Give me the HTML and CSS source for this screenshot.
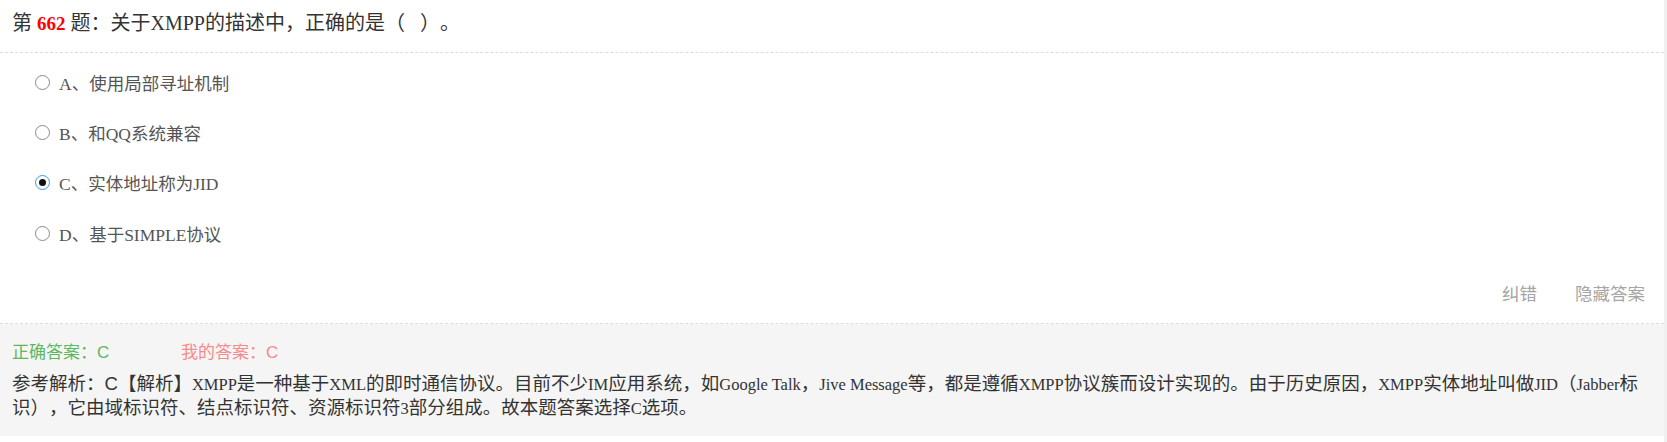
FILE: index.html
```html
<!DOCTYPE html>
<html lang="zh-CN">
<head>
<meta charset="utf-8">
<title>第662题</title>
<link rel="stylesheet" href="styles.css">
</head>
<body>
<div class="page">
  <div class="question">
    <div class="q-title">第 <span class="q-num">662</span> 题：关于XMPP的描述中，正确的是（&nbsp; &nbsp;）。</div>
    <ul class="options">
      <li class="option"><span class="radio"></span><span class="opt-text">A、使用局部寻址机制</span></li>
      <li class="option"><span class="radio"></span><span class="opt-text">B、和QQ系统兼容</span></li>
      <li class="option"><span class="radio checked"></span><span class="opt-text">C、实体地址称为JID</span></li>
      <li class="option"><span class="radio"></span><span class="opt-text">D、基于SIMPLE协议</span></li>
    </ul>
    <div class="actions">
      <span class="action">纠错</span>
      <span class="action">隐藏答案</span>
    </div>
    <div class="answer">
      <div class="answer-row">
        <span class="right-ans">正确答案：C</span>
        <span class="my-ans">我的答案：C</span>
      </div>
      <p class="analysis"><span class="label">参考解析：C</span>【解析】<span class="en">XMPP</span>是一种基于<span class="en">XML</span>的即时通信协议。目前不少<span class="en">IM</span>应用系统，如<span class="en">Google Talk</span>，<span class="en">Jive Message</span>等，都是遵循<span class="en">XMPP</span>协议簇而设计实现的。由于历史原因，<span class="en">XMPP</span>实体地址叫做<span class="en">JID</span>（<span class="en">Jabber</span>标识），它由域标识符、结点标识符、资源标识符<span class="en">3</span>部分组成。故本题答案选择<span class="en">C</span>选项。</p>
    </div>
  </div>
</div>
</body>
</html>
```
FILE: styles.css
```css
html, body {
  margin: 0;
  padding: 0;
}
body {
  background: #f0f0f0;
  font-family: "Liberation Serif", "Noto Sans CJK SC", serif;
  color: #333;
  text-spacing-trim: space-all;
}
.page {
  width: 1664px;
  background: #fff;
  padding-bottom: 20px;
}
.q-title {
  font-size: 20px;
  line-height: 30px;
  padding: 8px 12px 13px;
  border-bottom: 1px dashed #dcdcdc;
  color: #333;
}
.q-num {
  color: #ff0000;
  font-weight: bold;
  font-size: 19px;
}
.options {
  list-style: none;
  margin: 0;
  padding: 4px 0 0 35px;
}
.option {
  display: flex;
  align-items: center;
  height: 50.3px;
  font-size: 17.5px;
  color: #555;
}
.radio {
  box-sizing: border-box;
  width: 15px;
  height: 15px;
  border: 1px solid #8a8a8a;
  border-radius: 50%;
  background: #fff;
  margin-right: 9px;
  display: flex;
  align-items: center;
  justify-content: center;
}
.radio.checked {
  border: 1.5px solid #3b9ae6;
}
.radio.checked::after {
  content: "";
  width: 7px;
  height: 7px;
  border-radius: 50%;
  background: #111;
}
.actions {
  display: flex;
  justify-content: flex-end;
  gap: 38px;
  padding: 19px 19px 14px;
  line-height: 32px;
  font-size: 17.5px;
  color: #a5a5a5;
  font-family: "Noto Sans CJK SC", sans-serif;
  border-bottom: 1px dashed #dcdcdc;
}
.answer {
  background: #f5f5f5;
  padding: 17px 12px 16px;
}
.answer-row {
  display: flex;
  font-family: "Liberation Sans", "Noto Sans CJK SC", sans-serif;
  font-size: 17px;
  line-height: 24px;
}
.right-ans {
  color: #5cb85c;
  width: 169px;
}
.my-ans {
  color: #f78a8a;
}
.analysis {
  margin: 8px 0 0;
  font-size: 18.5px;
  line-height: 22.5px;
  color: #333;
  padding-right: 12px;
}
.label {
  font-family: "Liberation Sans", "Noto Sans CJK SC", sans-serif;
}
.en {
  font-size: 16.5px;
}
```
